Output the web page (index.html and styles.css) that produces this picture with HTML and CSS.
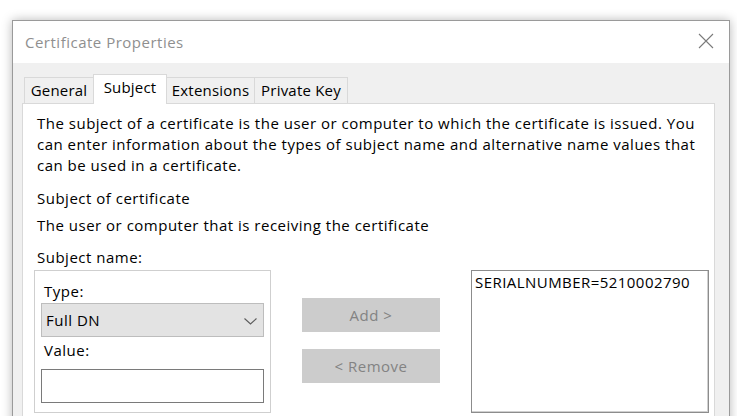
FILE: index.html
```html
<!DOCTYPE html>
<html lang="en">
<head>
<meta charset="utf-8">
<title>Certificate Properties</title>
<link rel="stylesheet" href="styles.css">
</head>
<body>
<div class="window">
  <div class="titlebar">
    <span class="title">Certificate Properties</span>
    <svg class="close" width="16" height="16" viewBox="0 0 16 16" aria-hidden="true">
      <path d="M1 1 L15 15 M15 1 L1 15" stroke="#7a7a7a" stroke-width="1.1" fill="none"/>
    </svg>
  </div>
  <div class="client">
    <div class="tabs">
      <div class="tab tab-general">General</div>
      <div class="tab tab-subject active">Subject</div>
      <div class="tab tab-extensions">Extensions</div>
      <div class="tab tab-key">Private Key</div>
    </div>
    <div class="panel">
      <p class="intro">The subject of a certificate is the user or computer to which the certificate is issued. You<br>can enter information about the types of subject name and alternative name values that<br>can be used in a certificate.</p>
      <p class="heading">Subject of certificate</p>
      <p class="desc">The user or computer that is receiving the certificate</p>
      <p class="label">Subject name:</p>
      <div class="editor">
        <div class="group">
          <div class="field-label">Type:</div>
          <div class="combo">
            <span>Full DN</span>
            <svg width="13" height="7" viewBox="0 0 13 7" aria-hidden="true">
              <path d="M0.5 0.5 L6.5 6 L12.5 0.5" stroke="#5c5c5c" stroke-width="1.1" fill="none"/>
            </svg>
          </div>
          <div class="field-label">Value:</div>
          <div class="input"></div>
        </div>
        <div class="buttons">
          <div class="btn">Add &gt;</div>
          <div class="btn">&lt; Remove</div>
        </div>
        <div class="list">
          <div class="item">SERIALNUMBER=5210002790</div>
        </div>
      </div>
    </div>
  </div>
</div>
</body>
</html>
```
FILE: styles.css
```css
html, body {
  margin: 0;
  padding: 0;
  background: #ffffff;
  overflow: hidden;
  height: 416px;
}

body {
  font-family: "Open Sans", "Noto Sans", sans-serif;
  font-size: 15px;
  letter-spacing: 0.5px;
  color: #000;
}

.window {
  margin: 20px 0 0 12px;
  width: 716px;
  height: 420px;
  border: 1px solid #9a9a9a;
  background: #f0f0f0;
  box-shadow: 0 0 10px rgba(0, 0, 0, 0.28);
}

.titlebar {
  height: 42px;
  background: #ffffff;
  display: flex;
  align-items: center;
  justify-content: space-between;
  padding: 0 15px 0 12px;
}

.title {
  color: #8f8f8f;
  font-size: 15px;
  letter-spacing: 0.5px;
}

.close {
  margin-top: -2px;
}

.client {
  padding: 11px 0 0 9px;
}

.tabs {
  display: flex;
  align-items: flex-end;
  padding-left: 2px;
  height: 29px;
  position: relative;
  z-index: 1;
}

.tab {
  height: 26px;
  box-sizing: border-box;
  border: 1px solid #d9d9d9;
  border-bottom: none;
  margin-left: -1px;
  line-height: 25px;
  text-align: center;
  background: #f0f0f0;
  white-space: nowrap;
  letter-spacing: 0.2px;
}

.tab:first-child {
  margin-left: 0;
}

.tab-general { width: 70px; }
.tab-subject { width: 74px; }
.tab-extensions { width: 89px; }
.tab-key { width: 94px; }

.tab.active {
  height: 30px;
  margin-bottom: -1px;
  line-height: 24px;
  background: #ffffff;
  position: relative;
  z-index: 2;
}

.panel {
  width: 693px;
  height: 330px;
  box-sizing: border-box;
  background: #ffffff;
  border: 1px solid #d9d9d9;
  padding: 9px 14px 0 14px;
}

.panel p {
  margin: 0;
  line-height: 21px;
  white-space: nowrap;
}

.heading {
  margin-top: 12px !important;
}

.desc {
  margin-top: 6px !important;
}

.label {
  margin-top: 11px !important;
}

.editor {
  display: flex;
  align-items: flex-start;
  gap: 31px;
  margin: 2px 0 0 -3px;
}

.group,
.buttons,
.list {
  flex-shrink: 0;
}

.group {
  width: 237px;
  height: 143px;
  box-sizing: border-box;
  border: 1px solid #cfcfcf;
  padding: 10px 6px 0 6px;
}

.field-label {
  line-height: 21px;
  padding-left: 3px;
}

.combo {
  margin-top: 1px;
  height: 34px;
  box-sizing: border-box;
  background: #e3e3e3;
  border: 1px solid #bdbdbd;
  display: flex;
  align-items: center;
  justify-content: space-between;
  padding: 0 6px 0 4px;
  margin-bottom: 3px;
}

.combo svg {
  margin-top: 2px;
}

.input {
  margin-top: 8px;
  height: 34px;
  box-sizing: border-box;
  background: #ffffff;
  border: 1px solid #7a7a7a;
}

.buttons {
  display: flex;
  flex-direction: column;
  gap: 17px;
  margin-top: 28px;
}

.btn {
  width: 138px;
  height: 34px;
  box-sizing: border-box;
  background: #cccccc;
  color: #838383;
  display: flex;
  align-items: center;
  justify-content: center;
}

.list {
  width: 238px;
  height: 143px;
  box-sizing: border-box;
  border: 1px solid #8c8c8c;
  box-shadow: inset -1px -1px 0 #d0d0d0;
  background: #ffffff;
  padding: 0 3px;
}

.item {
  line-height: 22px;
  white-space: nowrap;
  letter-spacing: 0.45px;
}
```
